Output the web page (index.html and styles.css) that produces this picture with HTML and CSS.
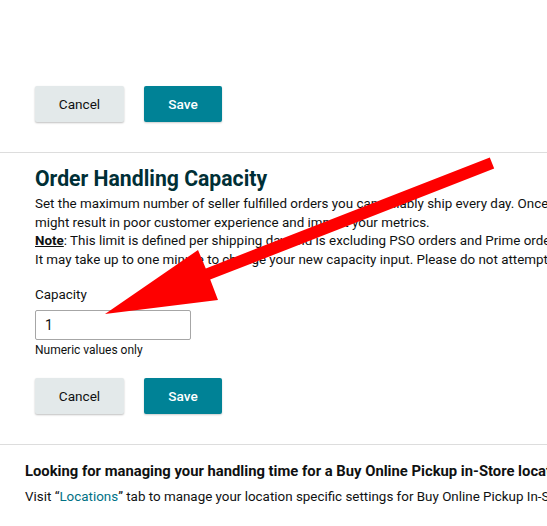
FILE: index.html
```html
<!DOCTYPE html>
<html>
<head>
<meta charset="utf-8">
<link rel="stylesheet" href="styles.css">
</head>
<body>
<div class="page">
  <section class="section top">
    <div class="actions">
      <button class="btn btn-cancel">Cancel</button>
      <button class="btn btn-save">Save</button>
    </div>
  </section>

  <section class="section capacity">
    <h2 class="title">Order Handling Capacity</h2>
    <div class="desc">
      <p class="line">Set the maximum number of seller fulfilled orders you can reliably ship every day. Once you reach this limit, exceeding it</p>
      <p class="line">might result in poor customer experience and impact your metrics.</p>
      <p class="line"><strong class="note">Note</strong>: This limit is defined per shipping day and is excluding PSO orders and Prime orders placed on your offers.</p>
      <p class="line">It may take up to one minute to change your new capacity input. Please do not attempt to update it again.</p>
    </div>
    <label class="field-label" for="cap">Capacity</label>
    <input class="field-input" id="cap" type="text" value="1">
    <div class="field-hint">Numeric values only</div>
    <div class="actions">
      <button class="btn btn-cancel">Cancel</button>
      <button class="btn btn-save">Save</button>
    </div>
  </section>

  <section class="section bopis">
    <div class="bopis-title">Looking for managing your handling time for a Buy Online Pickup in-Store location?</div>
    <div class="bopis-text">Visit “<a class="link" href="#">Locations</a>” tab to manage your location specific settings for Buy Online Pickup In-Store.</div>
  </section>

  <svg class="arrow" width="547" height="526" viewBox="0 0 547 526">
    <polygon points="489.8,157.4 494.2,168.6 210.2,279.6 218,300 105,314 198,250 205.8,268.4" fill="#fe0000"/>
  </svg>
</div>
</body>
</html>
```

FILE: styles.css
```css
html, body {
  margin: 0;
  padding: 0;
  background: #ffffff;
}

body {
  font-family: Roboto, "Liberation Sans", sans-serif;
  font-size: 13.4px;
  color: #0f1111;
  overflow: hidden;
  width: 547px;
  height: 526px;
}

.page {
  position: relative;
  width: 547px;
  height: 526px;
  overflow: hidden;
}

.section {
  border-bottom: 1px solid #dddddd;
}

.top {
  padding: 86px 35px 30px;
}

.actions {
  display: flex;
  gap: 20px;
}

.btn {
  height: 36px;
  border: none;
  border-radius: 2px;
  font-family: inherit;
  font-size: 13.6px;
  padding: 0;
  cursor: pointer;
}

.btn-cancel {
  width: 89px;
  background: #e3e9ea;
  color: #0f1111;
  box-shadow: 0 1px 2px rgba(0, 0, 0, 0.25);
}

.btn-save {
  width: 78px;
  background: #008296;
  color: #ffffff;
  font-weight: 500;
  box-shadow: 0 1px 2px rgba(0, 0, 0, 0.2);
}

.capacity {
  padding: 12px 35px 30px;
}

.title {
  margin: 0;
  font-size: 21.2px;
  line-height: 28px;
  font-weight: 700;
  color: #002f36;
}

.desc {
  margin-top: 2px;
  margin-bottom: 17px;
}

.line {
  margin: 0;
  white-space: nowrap;
  line-height: 18.5px;
}

.note {
  font-weight: 700;
  text-decoration: underline;
}

.field-label {
  display: block;
  line-height: 18px;
  margin-bottom: 6px;
}

.field-input {
  display: block;
  box-sizing: border-box;
  width: 156px;
  height: 30px;
  border: 1px solid #a6a6a6;
  border-radius: 2px;
  padding: 0 9px;
  font-family: inherit;
  font-size: 14px;
  color: #0f1111;
  outline: none;
}

.field-hint {
  font-size: 12px;
  line-height: 18px;
  margin-top: 1px;
  margin-bottom: 19px;
}

.bopis {
  border-bottom: none;
  padding: 16px 25px 0;
}

.bopis-title {
  font-weight: 700;
  font-size: 14.8px;
  white-space: nowrap;
  line-height: 20px;
}

.bopis-text {
  white-space: nowrap;
  line-height: 20px;
  margin-top: 6px;
}

.link {
  color: #007185;
  text-decoration: none;
}

.arrow {
  position: absolute;
  left: 0;
  top: 0;
  pointer-events: none;
}
```
